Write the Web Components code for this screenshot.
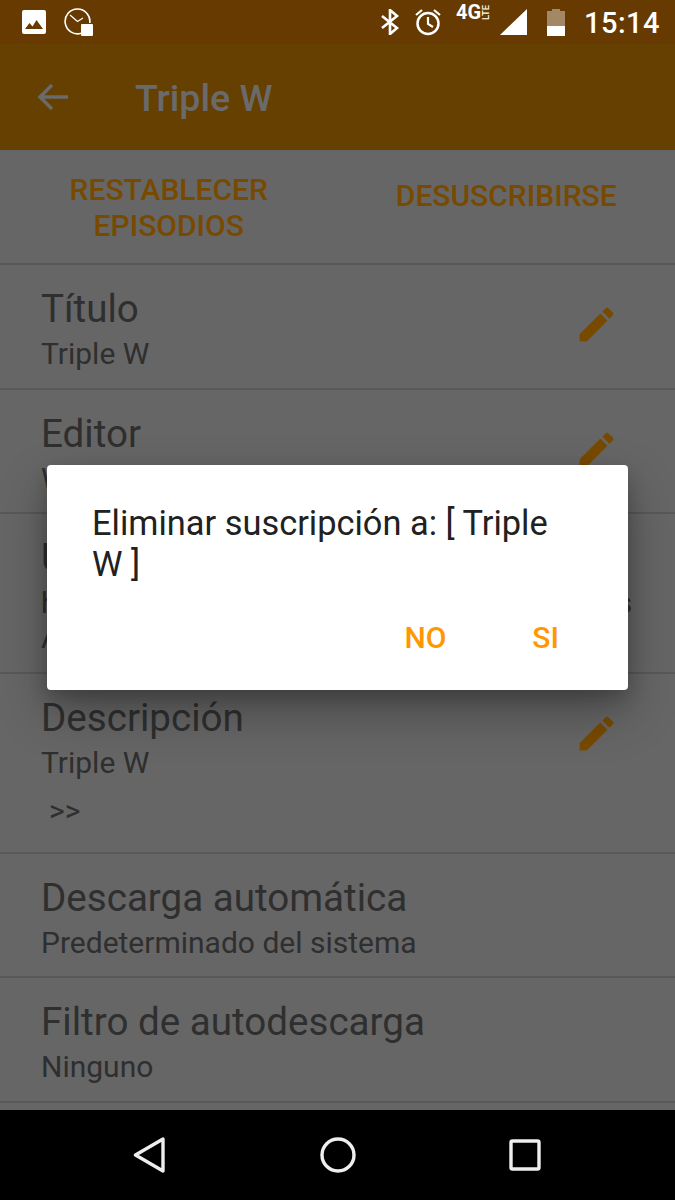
<!DOCTYPE html>
<html lang="es">
<head>
<meta charset="utf-8">
<title>Triple W</title>
<style>
  html, body { margin: 0; padding: 0; height: 100%; }
  body { font-family: Roboto, "Liberation Sans", sans-serif; background: #000; overflow: hidden; }
  .extra { margin-top: 13px; padding-left: 8px; margin-bottom: 7.5px; }
</style>
</head>
<body>
<phone-screen>
  <status-bar slot="top"></status-bar>
  <app-toolbar heading="Triple W"></app-toolbar>
  <action-bar></action-bar>
  <pref-row heading="Título" editable>Triple W</pref-row>
  <pref-row heading="Editor" editable>W</pref-row>
  <pref-row heading="Url">https://www.abc.net.au/triplej/ww/podcasts<br>ABC</pref-row>
  <pref-row heading="Descripción" editable>Triple W<div class="extra">&gt;&gt;</div></pref-row>
  <pref-row heading="Descarga automática">Predeterminado del sistema</pref-row>
  <pref-row heading="Filtro de autodescarga">Ninguno</pref-row>
  <confirm-dialog slot="overlay" yes="SI" no="NO">Eliminar suscripción a: [ Triple W ]</confirm-dialog>
  <nav-bar slot="bottom"></nav-bar>
</phone-screen>

<script>
// Marco de la pantalla: barra de estado, contenido, velo y barra de navegación
class PhoneScreen extends HTMLElement {
  constructor() {
    super();
    this.attachShadow({ mode: 'open' });
    this.shadowRoot.innerHTML = `
      <style>
        :host { display: flex; flex-direction: column; width: 675px; height: 1200px; position: relative; overflow: hidden; }
        .main { flex: 1; min-height: 0; overflow: hidden; background: #ccc; display: flex; flex-direction: column; position: relative; }
        .scrim { position: absolute; inset: 0; background: rgba(0,0,0,.5); }
      </style>
      <slot name="top"></slot>
      <div class="main"><slot></slot><div class="scrim"></div></div>
      <slot name="overlay"></slot>
      <slot name="bottom"></slot>
    `;
  }
}

class StatusBar extends HTMLElement {
  constructor() {
    super();
    this.attachShadow({ mode: 'open' });
    this.shadowRoot.innerHTML = `
      <style>
        :host { display: flex; height: 44px; background: #663a00; color: #fff; align-items: center; padding: 0 15px 0 22px; flex: none; }
        svg { display: block; flex: none; }
        .left, .right { display: flex; align-items: center; }
        .right { margin-left: auto; }
        .net { width: 37px; height: 28px; margin: -12px 7px 0 14px; display: flex; align-items: flex-start; font-size: 20px; font-weight: 700; line-height: 20px; }
        .net small { font-size: 9.500px; font-weight: 500; line-height: 9px; writing-mode: vertical-rl; transform: rotate(180deg); margin: 3px 0 0 0; height: 15px; text-align: center; }
        .time { font-size: 29px; font-weight: 500; margin: 2px 0 0 19px; letter-spacing: .5px; }
      </style>
      <div class="left">
        <svg width="24" height="24" viewBox="0 0 24 24"><path fill="#fff" d="M2 0h20a2 2 0 0 1 2 2v20a2 2 0 0 1-2 2H2a2 2 0 0 1-2-2V2a2 2 0 0 1 2-2z"/><path fill="#663a00" d="M3 19l4.500-6 3 3.500 4-6.500L21 19z"/></svg>
        <svg style="margin-left:18px" width="30" height="30" viewBox="0 0 30 30"><path fill="none" stroke="#fff" stroke-width="1.600" d="M17 26.300A12.400 12.400 0 1 1 25.800 16"/><path fill="none" stroke="#fff" stroke-width="1.300" d="M6 8l7.500 6.500L19 11"/><rect x="17" y="17" width="12" height="12" rx="1" fill="#fff"/></svg>
      </div>
      <div class="right">
        <svg width="20" height="26" viewBox="0 0 20 26"><path fill="none" stroke="#fff" stroke-width="2.600" d="M2 7l15 12-7 6V1l7 6L2 19"/></svg>
        <svg style="margin-left:14px" width="28" height="28" viewBox="0 0 28 28"><circle cx="14" cy="15.500" r="10.500" fill="none" stroke="#fff" stroke-width="2.500"/><path fill="none" stroke="#fff" stroke-width="2.200" d="M14 9v7l5 3M2 7l6-5M26 7l-6-5"/></svg>
        <div class="net">4G<small>LTE</small></div>
        <svg width="27" height="26" viewBox="0 0 27 26"><path fill="#fff" d="M27 0v26H0z"/></svg>
        <svg style="margin-left:20px" width="18" height="27" viewBox="0 0 18 27"><path fill="#fff" fill-opacity=".4" d="M5 0h8v2h5v15H0V2h5z"/><path fill="#fff" d="M0 17h18v10H0z"/></svg>
        <span class="time">15:14</span>
      </div>
    `;
  }
}

class AppToolbar extends HTMLElement {
  constructor() {
    super();
    this.attachShadow({ mode: 'open' });
    this.shadowRoot.innerHTML = `
      <style>
        :host { display: flex; align-items: center; height: 106px; background: #cc8000; color: #d4d4d4; flex: none; padding-left: 37px; box-sizing: border-box; }
        svg { display: block; flex: none; }
        h1 { margin: 2px 0 0 67px; font-size: 37.500px; font-weight: 500; }
      </style>
      <svg width="31" height="28" viewBox="0 0 31 28"><path fill="none" stroke="#d4d4d4" stroke-width="3.400" d="M31 14H3M15 2L3 14l12 12"/></svg>
      <h1></h1>
    `;
  }
  connectedCallback() {
    this.shadowRoot.querySelector('h1').textContent = this.getAttribute('heading');
  }
}

class ActionBar extends HTMLElement {
  constructor() {
    super();
    this.attachShadow({ mode: 'open' });
    this.shadowRoot.innerHTML = `
      <style>
        :host { display: grid; grid-template-columns: 1fr 1fr; height: 115px; box-sizing: border-box; border-bottom: 2px solid #b3b3b3; color: #f09400; font-size: 30px; font-weight: 500; line-height: 36px; text-align: center; flex: none; }
        .reset { padding-top: 22px; }
        .unsub { padding-top: 28px; }
      </style>
      <div class="reset">RESTABLECER<br>EPISODIOS</div>
      <div class="unsub">DESUSCRIBIRSE</div>
    `;
  }
}

// Fila de ajustes con título, valor (slot) y lápiz opcional
class PrefRow extends HTMLElement {
  constructor() {
    super();
    this.attachShadow({ mode: 'open' });
    this.shadowRoot.innerHTML = `
      <style>
        :host { display: flex; flex: none; box-sizing: border-box; padding: 22px 0 16.500px 41px; border-bottom: 2px solid #b3b3b3; color: #5e5e5e; }
        .text { flex: 1; min-width: 0; }
        .title { font-size: 38.600px; line-height: 44px; }
        .value { font-size: 30px; line-height: 35px; margin-top: 5px; white-space: nowrap; }
        svg { display: none; flex: none; width: 45px; height: 45px; margin: 15px 56px 0 0; fill: #f09400; }
        :host([editable]) svg { display: block; }
      </style>
      <div class="text">
        <div class="title"></div>
        <div class="value"><slot></slot></div>
      </div>
      <svg viewBox="0 0 24 24"><path d="M3 17.250V21h3.750L17.810 9.940l-3.750-3.750L3 17.250zM20.710 7.040c.39-.39.39-1.020 0-1.410l-2.340-2.340c-.39-.39-1.020-.39-1.410 0l-1.830 1.830 3.750 3.750 1.830-1.830z"/></svg>
    `;
  }
  connectedCallback() {
    this.shadowRoot.querySelector('.title').textContent = this.getAttribute('heading');
  }
}

class ConfirmDialog extends HTMLElement {
  constructor() {
    super();
    this.attachShadow({ mode: 'open' });
    this.shadowRoot.innerHTML = `
      <style>
        :host { position: absolute; left: 47px; top: 465px; width: 581px; height: 225px; box-sizing: border-box; padding: 38px 46px 0 45px; background: #fff; border-radius: 4px; box-shadow: 0 22px 50px rgba(0,0,0,.3), 0 8px 18px rgba(0,0,0,.18); color: #212121; display: flex; flex-direction: column; }
        .msg { font-size: 34.400px; line-height: 41px; }
        .btns { display: flex; justify-content: flex-end; gap: 86px; margin-top: 35px; padding-right: 23px; color: #ff9800; font-size: 30px; font-weight: 500; line-height: 36px; }
      </style>
      <div class="msg"><slot></slot></div>
      <div class="btns"><span class="no"></span><span class="yes"></span></div>
    `;
  }
  connectedCallback() {
    this.shadowRoot.querySelector('.no').textContent = this.getAttribute('no');
    this.shadowRoot.querySelector('.yes').textContent = this.getAttribute('yes');
  }
}

class NavBar extends HTMLElement {
  constructor() {
    super();
    this.attachShadow({ mode: 'open' });
    this.shadowRoot.innerHTML = `
      <style>
        :host { display: flex; justify-content: center; align-items: center; gap: 152px; height: 90px; background: #000; flex: none; }
        svg { display: block; fill: none; stroke: #eee; stroke-width: 3.400; stroke-linejoin: round; }
      </style>
      <svg width="36" height="36" viewBox="0 0 36 36"><path d="M31 2v32L3.500 18z"/></svg>
      <svg width="36" height="36" viewBox="0 0 36 36"><circle cx="18" cy="18" r="16"/></svg>
      <svg width="36" height="36" viewBox="0 0 36 36"><rect x="3" y="4" width="28" height="28" rx="1.500"/></svg>
    `;
  }
}

customElements.define('phone-screen', PhoneScreen);
customElements.define('status-bar', StatusBar);
customElements.define('app-toolbar', AppToolbar);
customElements.define('action-bar', ActionBar);
customElements.define('pref-row', PrefRow);
customElements.define('confirm-dialog', ConfirmDialog);
customElements.define('nav-bar', NavBar);
</script>
</body>
</html>
